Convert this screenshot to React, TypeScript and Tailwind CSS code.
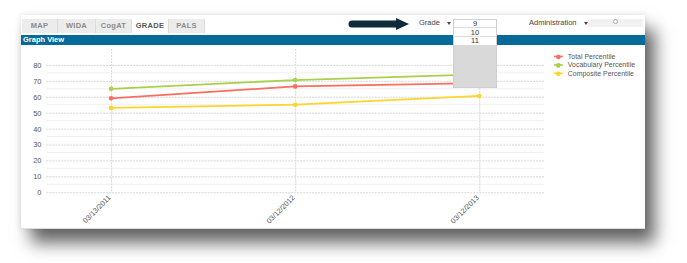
import React from 'react';

const tabs = [
  { label: 'MAP', w: 'w-[36px]' },
  { label: 'WIDA', w: 'w-[38px]' },
  { label: 'CogAT', w: 'w-[36px]' },
  { label: 'GRADE', w: 'w-[37px]', active: true },
  { label: 'PALS', w: 'w-[36px]' },
];

const xs = [110, 295, 480];
const dates = ['03/13/2011', '03/12/2012', '03/12/2013'];

const series = [
  { name: 'Total Percentile', color: '#fa6e5f', values: [59, 66.5, 68.5] },
  { name: 'Vocabulary Percentile', color: '#a9d04c', values: [65, 70.5, 74] },
  { name: 'Composite Percentile', color: '#fdd52b', values: [53, 55, 60.5] },
];

const yOf = (v: number) => 193 - v * 1.6;

function Caret() {
  return (
    <svg width="4" height="3" viewBox="0 0 4 3" className="mt-[7px]">
      <polygon points="0,0 4,0 2,3" fill="#444" />
    </svg>
  );
}

function Chart() {
  const major = [0, 10, 20, 30, 40, 50, 60, 70, 80];
  const minor = [5, 15, 25, 35, 45, 55, 65, 75];
  return (
    <svg width="624" height="184" viewBox="21 45 624 184" className="block">
      {minor.map((v) => (
        <line key={'m' + v} x1={45} x2={545} y1={yOf(v)} y2={yOf(v)} stroke="#f0f0f0" strokeWidth={1} />
      ))}
      {major.map((v) => (
        <g key={v}>
          <line x1={45} x2={545} y1={yOf(v) + 0.5} y2={yOf(v) + 0.5} stroke="#d6d6d6" strokeWidth={1} strokeDasharray="2 1" />
          <text x={40} y={yOf(v) + 3} textAnchor="end" fontSize="7.5" fill="#555" fontFamily="'Liberation Sans', Arial, sans-serif">
            {v}
          </text>
        </g>
      ))}
      {xs.map((x, i) => (
        <g key={x}>
          <line x1={x + 0.5} x2={x + 0.5} y1={49} y2={193} stroke="#d6d6d6" strokeWidth={1} strokeDasharray="2 1" />
          <text
            x={x}
            y={199}
            textAnchor="end"
            fontSize="7.3"
            fill="#555"
            fontFamily="'Liberation Sans', Arial, sans-serif"
            transform={`rotate(-45 ${x} 199)`}
          >
            {dates[i]}
          </text>
        </g>
      ))}
      {series.map((s) => (
        <g key={s.name}>
          <polyline
            points={s.values.map((v, i) => `${xs[i]},${yOf(v)}`).join(' ')}
            fill="none"
            stroke={s.color}
            strokeWidth={1.8}
          />
          {s.values.map((v, i) => (
            <circle key={i} cx={xs[i]} cy={yOf(v)} r={2.3} fill={s.color} />
          ))}
        </g>
      ))}
      {series.map((s, i) => {
        const y = 56.5 + i * 8.5;
        return (
          <g key={'l' + s.name}>
            <line x1={555} x2={564} y1={y} y2={y} stroke={s.color} strokeWidth={1.6} />
            <circle cx={559.5} cy={y + 0.5} r={2.3} fill={s.color} />
            <text x={569} y={y + 2.5} fontSize="7" fill="#555" fontFamily="'Liberation Sans', Arial, sans-serif">
              {s.name}
            </text>
          </g>
        );
      })}
    </svg>
  );
}

export default function App() {
  return (
    <div className="w-[687px] h-[263px] bg-white pt-[15px] pl-[21px] font-['Liberation_Sans',Arial,sans-serif]">
      <div className="relative w-[624px] h-[214px] bg-white flex flex-col border-b border-[#dcdcdc] shadow-[10px_14px_16px_rgba(0,0,0,0.6),0_0_6px_rgba(0,0,0,0.12)]">
        <div className="h-[20px] flex items-start">
          <div className="flex mt-[4px] ml-[1px] h-[14px]">
            {tabs.map((t) => (
              <div
                key={t.label}
                className={`${t.w} flex items-center justify-center border-r border-[#dcdcdc] text-[7.5px] font-bold tracking-[0.3px] ${
                  t.active ? 'bg-white text-[#555]' : 'bg-[#ececec] text-[#8a8a8a]'
                }`}
              >
                {t.label}
              </div>
            ))}
          </div>
          <svg width="61" height="12" viewBox="0 0 61 12" className="ml-[143px] mt-[3px]">
            <path d="M4 2.5 H48 V0 L61 6 L48 12 V9.5 H4 A3.5 3.5 0 0 1 4 2.5 Z" fill="#0f2b3b" />
          </svg>
          <div className="ml-[10px] w-[28px] mt-[4px] text-[7.5px] leading-[8px] text-[#444]">Grade</div>
          <Caret />
          <div className="ml-[78px] w-[55px] mt-[4px] text-[7.5px] leading-[8px] text-[#444]">Administration</div>
          <Caret />
          <div className="mt-[4px] w-[55px] h-[8px] bg-[#f1f1f1] flex justify-center">
            <div className="w-[5px] h-[5px] rounded-full border border-[#aaa] bg-white" />
          </div>
        </div>
        <div className="h-[10px] bg-[#066b98] text-white text-[7.5px] font-bold leading-[10px] pl-[2px]">Graph View</div>
        <Chart />
        <div className="absolute left-[432px] top-[4px] w-[44px] h-[69px] flex flex-col border border-[#cfcfcf] bg-[#d9d9d9] text-[7.5px] text-[#333]">
          <div className="h-[8px] leading-[8px] bg-white text-center border-b border-[#ddd]">9</div>
          <div className="h-[9px] leading-[9px] bg-white text-center border-b border-[#ddd]">10</div>
          <div className="h-[8px] leading-[8px] bg-white text-center">11</div>
        </div>
      </div>
    </div>
  );
}
